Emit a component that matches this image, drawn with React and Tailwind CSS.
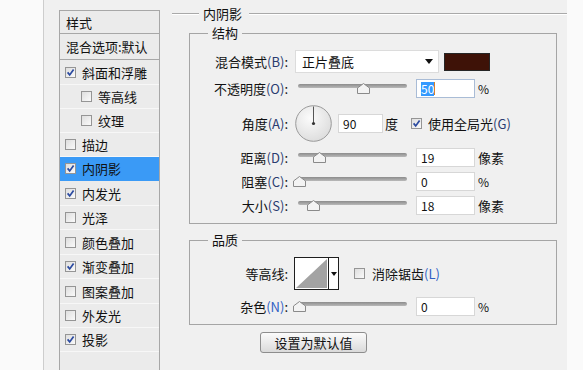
import React from "react";

const styles = [
  { t: "斜面和浮雕", on: true, h: "h-[25px]" },
  { t: "等高线", sub: true, h: "h-[24px]" },
  { t: "纹理", sub: true, h: "h-[24px]" },
  { t: "描边", h: "h-[24px]" },
  { t: "内阴影", on: true, sel: true, h: "h-[24px]" },
  { t: "内发光", on: true, h: "h-[25px]" },
  { t: "光泽", h: "h-[24px]" },
  { t: "颜色叠加", h: "h-[25px]" },
  { t: "渐变叠加", on: true, h: "h-[24px]" },
  { t: "图案叠加", h: "h-[25px]" },
  { t: "外发光", h: "h-[24px]" },
  { t: "投影", on: true, h: "h-[24px]" },
];

function Check({ on }) {
  return (
    <span className="w-[11px] h-[11px] shrink-0 border border-[#959595] bg-linear-to-br from-[#dedede] to-[#fafafa] flex items-center justify-center">
      {on && (
        <svg width="9" height="9" viewBox="0 0 9 9">
          <path d="M1.6 4.4 L3.7 6.9 L7.6 1.4" fill="none" stroke="#2b4aa0" strokeWidth="1.7" />
        </svg>
      )}
    </span>
  );
}

function Label({ text, k, blue }) {
  return (
    <span className="w-[98px] shrink-0 text-right whitespace-nowrap text-[13px]">
      {text}
      <span className={blue ? "text-[#2f5fc4]" : "text-[#2a3c70]"}>({k})</span>:
    </span>
  );
}

function Slider({ pos }) {
  return (
    <div className="relative w-[109px] h-[19px] shrink-0">
      <div className="absolute left-0 right-0 top-[5px] h-[4px] rounded-full bg-linear-to-b from-[#8c8c8c] to-[#b9b9b9]" />
      <svg className="absolute top-[4px]" style={{ left: pos }} width="13" height="11" viewBox="0 0 13 11">
        <path d="M6.5 0.5 L12.5 5 V10.5 H0.5 V5 Z" fill="#f3f3f3" stroke="#8a8a8a" />
      </svg>
    </div>
  );
}

function Field({ children, w = "w-[59px]", focus }) {
  return (
    <div
      className={`${w} h-[19px] shrink-0 bg-white border ${
        focus ? "border-[#a9bcd6]" : "border-[#d7d7d7]"
      } flex items-center pl-[4px] text-[12px]`}
    >
      {children}
    </div>
  );
}

function Legend({ children }) {
  return (
    <legend className="ml-[18px] px-[4px] text-[13px] leading-[14px]">{children}</legend>
  );
}

export default function App() {
  return (
    <div className="w-[583px] h-[370px] flex overflow-hidden bg-[#fafafa] text-[#111] font-['Noto_Sans_CJK_SC','Microsoft_YaHei',sans-serif]">
      <div className="w-[44px] shrink-0 border-r border-[#cdcdcd]" />

      <div className="w-[523px] shrink-0 bg-[#f0f0f0] flex">
        {/* styles list */}
        <div className="mt-[10px] ml-[15px] w-[101px] shrink-0 border border-b-0 border-[#a7a7a7] bg-[#ebebeb] text-[13px]">
          <div className="h-[23px] border-b border-[#a7a7a7] pl-[6px] flex items-center leading-none">样式</div>
          <div className="h-[26px] border-b border-[#a7a7a7] pl-[6px] flex items-center leading-none whitespace-nowrap">
            混合选项:默认
          </div>
          {styles.map((s) => (
            <div
              key={s.t}
              className={`${s.h} flex items-center gap-[6px] border-b leading-none ${
                s.sel ? "bg-[#3a9af6] border-[#3a9af6]" : "border-[#f7f7f7]"
              } ${s.sub ? "pl-[21px]" : "pl-[5px]"}`}
            >
              <Check on={s.on} />
              <span>{s.t}</span>
            </div>
          ))}
        </div>

        {/* settings */}
        <div className="ml-[12px] w-[395px] shrink-0 text-[12px]">
          <div className="h-[26px] flex items-center">
            <div className="w-[27px] h-px bg-[#a9a9a9] shadow-[0_1px_0_#fff]" />
            <span className="ml-[4px] mr-[7px] text-[13px] leading-none">内阴影</span>
            <div className="flex-1 h-px bg-[#a9a9a9] shadow-[0_1px_0_#fff]" />
          </div>

          <fieldset className="ml-[17px] w-[368px] border border-[#a5a5a5] pb-[8px]">
            <Legend>结构</Legend>

            <div className="mt-[10px] h-[23px] flex items-center">
              <Label text="混合模式" k="B" />
              <div className="ml-[7px] w-[144px] h-[23px] bg-white border border-[#dcdcdc] flex items-center pl-[6px] pr-[5px] text-[13px]">
                <span className="flex-1">正片叠底</span>
                <svg width="8" height="5" viewBox="0 0 8 5">
                  <path d="M0 0 H8 L4 5 Z" fill="#111" />
                </svg>
              </div>
              <div className="ml-[5px] w-[46px] h-[18px] bg-[#3e1207] border border-[#262626]" />
            </div>

            <div className="mt-[6px] h-[19px] flex items-center">
              <Label text="不透明度" k="O" />
              <div className="ml-[10px]">
                <Slider pos={59} />
              </div>
              <div className="ml-[9px]">
                <Field focus>
                  <span className="bg-[#3399ff] text-white leading-[14px]">50</span>
                  <span className="w-px h-[13px] bg-[#d9822b]" />
                </Field>
              </div>
              <span className="ml-[3px]">%</span>
            </div>

            <div className="mt-[7px] h-[37px] flex items-center">
              <Label text="角度" k="A" />
              <svg className="ml-[7px] shrink-0" width="37" height="37" viewBox="0 0 37 37">
                <defs>
                  <radialGradient id="dial" cx="0.4" cy="0.35" r="0.7">
                    <stop offset="0" stopColor="#fbfbfb" />
                    <stop offset="1" stopColor="#dcdcdc" />
                  </radialGradient>
                </defs>
                <circle cx="18.5" cy="18.5" r="17.8" fill="url(#dial)" stroke="#9a9a9a" />
                <line x1="18.5" y1="1.5" x2="18.5" y2="18.5" stroke="#555" strokeWidth="1" />
                <circle cx="18.5" cy="18.5" r="1.6" fill="#333" />
              </svg>
              <div className="ml-[6px]">
                <Field w="w-[45px]">90</Field>
              </div>
              <span className="ml-[2px] text-[13px]">度</span>
              <span className="ml-[13px] flex items-center gap-[6px] whitespace-nowrap">
                <Check on />
                <span className="text-[13px]">
                  使用全局光<span className="text-[#2a3c70]">(G)</span>
                </span>
              </span>
            </div>

            <div className="mt-[6px] h-[19px] flex items-center">
              <Label text="距离" k="D" />
              <div className="ml-[10px]">
                <Slider pos={15} />
              </div>
              <div className="ml-[9px]">
                <Field>19</Field>
              </div>
              <span className="ml-[3px] text-[13px]">像素</span>
            </div>

            <div className="mt-[5px] h-[19px] flex items-center">
              <Label text="阻塞" k="C" />
              <div className="ml-[10px]">
                <Slider pos={-5} />
              </div>
              <div className="ml-[9px]">
                <Field>0</Field>
              </div>
              <span className="ml-[3px]">%</span>
            </div>

            <div className="mt-[5px] h-[19px] flex items-center">
              <Label text="大小" k="S" />
              <div className="ml-[10px]">
                <Slider pos={9} />
              </div>
              <div className="ml-[9px]">
                <Field>18</Field>
              </div>
              <span className="ml-[3px] text-[13px]">像素</span>
            </div>
          </fieldset>

          <fieldset className="mt-[9px] ml-[17px] w-[368px] border border-[#a5a5a5] pb-[8px]">
            <Legend>品质</Legend>

            <div className="mt-[10px] h-[33px] flex items-center">
              <span className="w-[98px] shrink-0 text-right text-[13px]">等高线:</span>
              <div className="ml-[6px] w-[45px] h-[33px] shrink-0 border border-[#1e1e1e] bg-white flex">
                <svg width="33" height="31" viewBox="0 0 33 31">
                  <path d="M1 30 L32 1 V30 Z" fill="#a3a3a3" />
                </svg>
                <div className="flex-1 border-l border-[#1e1e1e] flex items-center justify-center">
                  <svg width="6" height="4" viewBox="0 0 6 4">
                    <path d="M0 0 H6 L3 4 Z" fill="#111" />
                  </svg>
                </div>
              </div>
              <span className="ml-[15px] flex items-center gap-[7px] whitespace-nowrap">
                <Check />
                <span className="text-[13px]">
                  消除锯齿<span className="text-[#2f5fc4]">(L)</span>
                </span>
              </span>
            </div>

            <div className="mt-[7px] h-[19px] flex items-center">
              <Label text="杂色" k="N" blue />
              <div className="ml-[10px]">
                <Slider pos={-5} />
              </div>
              <div className="ml-[9px]">
                <Field>0</Field>
              </div>
              <span className="ml-[3px]">%</span>
            </div>
          </fieldset>

          <button className="mt-[7px] ml-[88px] w-[107px] h-[21px] rounded-[3px] border border-[#8d8d8d] bg-linear-to-b from-[#fbfbfb] to-[#dadada] text-[13px] leading-none flex items-center justify-center">
            设置为默认值
          </button>
        </div>
      </div>

      <div className="flex-1" />
    </div>
  );
}
